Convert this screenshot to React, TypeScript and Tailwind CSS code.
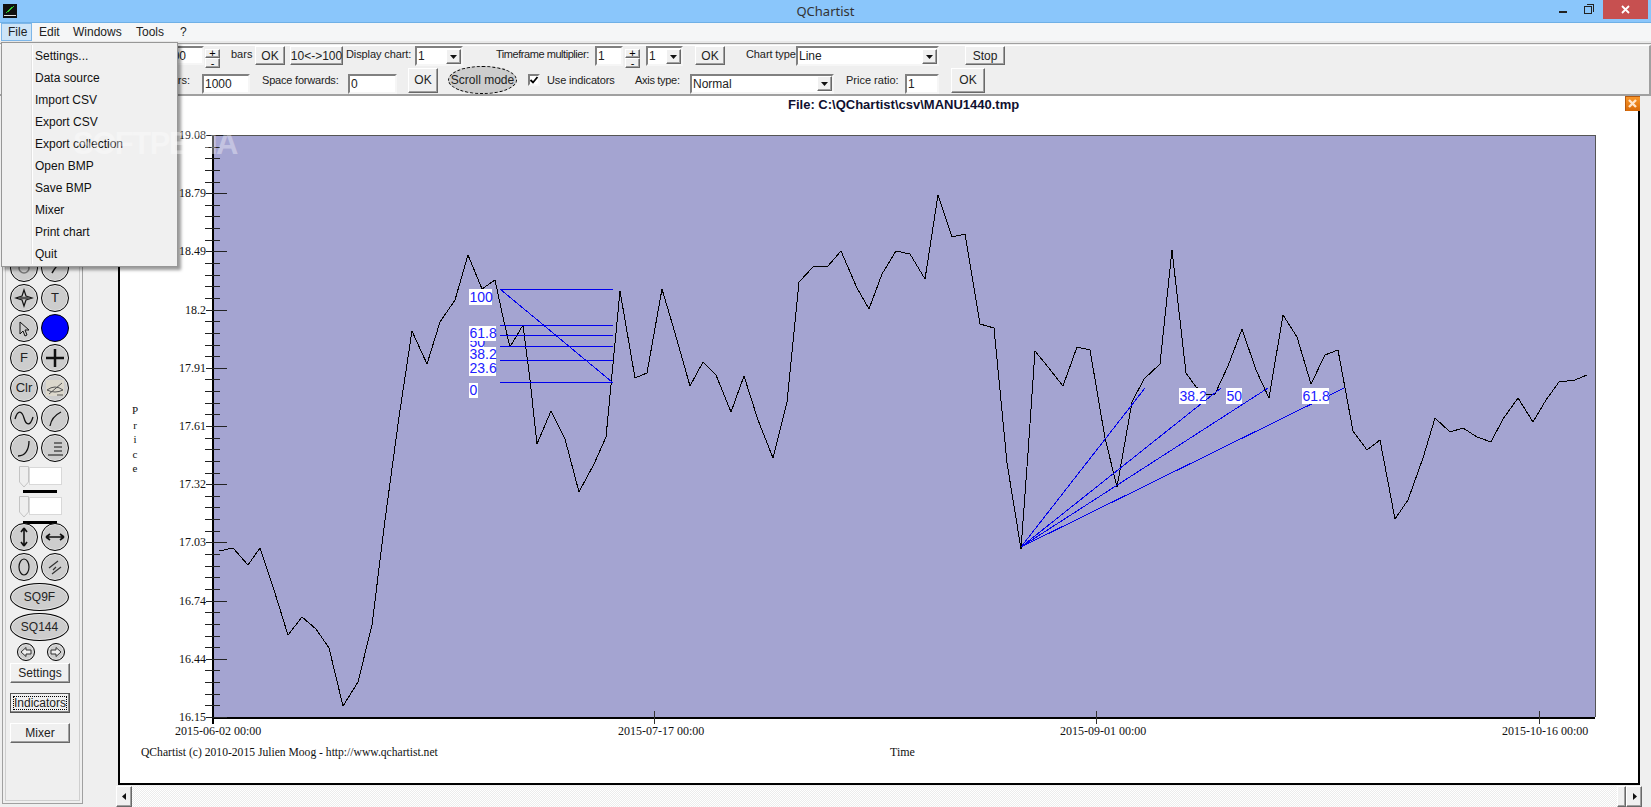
import React from "react";

const trace =
  "219,551 233,548 248,565 260,548 274,590 288,635 302,617 316,629 329,648 343,706 358,682 372,625 385,520 399,417 412,331 427,364 440,322 455,300 468,255 482,289 495,280 504,322 510,347 523,325 530,380 537,444 551,411 565,439 579,492 594,464 606,437 620,291 635,378 647,373 662,289 675,333 690,386 703,362 716,375 731,412 744,376 758,420 773,458 787,402 799,282 813,267 828,266 841,251 857,288 869,309 882,274 896,251 910,254 925,279 938,195 952,237 965,234 980,324 994,328 1007,463 1021,549 1028,453 1035,351 1048,367 1063,386 1077,347 1090,350 1105,438 1117,487 1132,402 1144,379 1160,364 1172,250 1186,373 1196,387 1207,395 1215,394 1228,366 1242,329 1256,370 1269,398 1283,315 1297,337 1311,384 1325,355 1338,350 1353,431 1367,450 1380,440 1395,519 1408,500 1423,458 1435,418 1450,432 1463,428 1477,437 1491,442 1503,419 1518,398 1533,422 1546,400 1559,382 1575,380 1587,375";

const yLabels = ["19.08", "18.79", "18.49", "18.2", "17.91", "17.61", "17.32", "17.03", "16.74", "16.44", "16.15"];
const menuItems = ["Settings...", "Data source", "Import CSV", "Export CSV", "Export collection", "Open BMP", "Save BMP", "Mixer", "Print chart", "Quit"];
const retrace = [289, 325, 335, 346, 360, 382];

const raised = "bg-[#f0f0f0] border border-t-white border-l-white border-r-[#696969] border-b-[#696969] shadow-[inset_-1px_-1px_0_#a0a0a0]";
const sunken = "bg-white border-2 border-t-[#808080] border-l-[#808080] border-r-[#f6f6f6] border-b-[#f6f6f6]";
const round = "bg-[#cdcdcd] border-[1.5px] border-black shadow-[inset_0_0_0_1px_#e6e6e6] flex items-center justify-center";

const Arrow = ({ dir = "down" }: { dir?: "down" | "left" | "right" }) => (
  <svg width="9" height="9" viewBox="0 0 9 9">
    {dir === "down" && <polygon points="1,3 8,3 4.5,7" fill="#111" />}
    {dir === "left" && <polygon points="6,1 6,8 2,4.5" fill="#111" />}
    {dir === "right" && <polygon points="3,1 3,8 7,4.5" fill="#111" />}
  </svg>
);

const Label = ({ className, children }: { className: string; children: React.ReactNode }) => (
  <div className={`shrink-0 whitespace-nowrap text-[11px] leading-[14px] text-[#222] ${className}`}>{children}</div>
);

const Btn = ({ className, children }: { className: string; children: React.ReactNode }) => (
  <div className={`shrink-0 flex items-center justify-center whitespace-nowrap text-[12px] text-[#222] ${raised} ${className}`}>{children}</div>
);

const Field = ({ className, value }: { className: string; value: string }) => (
  <div className={`shrink-0 flex items-center pl-[1px] text-[12px] text-[#222] ${sunken} ${className}`}>{value}</div>
);

const Combo = ({ className, value }: { className: string; value: string }) => (
  <div className={`shrink-0 flex items-center justify-between text-[12px] text-[#222] ${sunken} ${className}`}>
    <span className="pl-[1px]">{value}</span>
    <div className={`w-[15px] h-[15px] flex items-center justify-center ${raised}`}>
      <Arrow />
    </div>
  </div>
);

const Spin = ({ className }: { className: string }) => (
  <div className={`shrink-0 w-[15px] h-[19px] flex flex-col mt-[3px] ${className}`}>
    <div className={`h-[9px] flex items-center justify-center text-[11px] leading-none ${raised}`}>+</div>
    <div className={`h-[10px] flex items-center justify-center text-[11px] leading-none ${raised}`}>-</div>
  </div>
);

const Tool = ({ children, className = "" }: { children?: React.ReactNode; className?: string }) => (
  <div className={`w-[28px] h-[28px] rounded-full text-[13px] text-[#222] ${round} ${className}`}>{children}</div>
);

const Glyph = ({ children }: { children: React.ReactNode }) => (
  <svg width="24" height="24" viewBox="0 0 24 24" fill="none" stroke="#111" strokeWidth="1.5">
    {children}
  </svg>
);

const Slider = ({ className }: { className: string }) => (
  <div className={`flex items-start ml-[13px] ${className}`}>
    <svg width="10" height="22" viewBox="0 0 10 22">
      <polygon points="0.5,0.5 9.5,0.5 9.5,16 5,21 0.5,16" fill="#eeeeee" stroke="#c4c4c4" />
    </svg>
    <div className="w-[33px] h-[18px] mt-[1px] bg-white border border-[#d8d8d8]" />
  </div>
);

const Rule = ({ className }: { className: string }) => <div className={`ml-[17px] w-[34px] h-[3px] bg-black ${className}`} />;

const WideTool = ({ label, className }: { label: string; className: string }) => (
  <div className={`ml-[4px] w-[59px] h-[28px] rounded-[50%] text-[12px] text-[#222] ${round} ${className}`}>{label}</div>
);

const SideBtn = ({ label, className = "" }: { label: string; className?: string }) => (
  <div className={`ml-[4px] w-[60px] h-[20px] flex items-center justify-center text-[12px] text-[#222] ${className}`}>{label}</div>
);

const Sidebar = () => (
  <div className="ml-[2px] w-[81px] h-[708px] border border-[#a0a0a0]">
    <div className="m-[2px] h-[702px] border border-[#cfcfcf] pt-[4px]">
      <div className="ml-[4px] grid grid-cols-[28px_28px] gap-x-[3px] gap-y-[2px]">
        <Tool />
        <Tool />
        <Tool />
        <Tool />
        <Tool />
        <Tool />
        <Tool />
        <Tool />
        <Tool />
        <Tool />
        <Tool>
          <Glyph>
            <circle cx="12" cy="12" r="5" stroke="#777" />
          </Glyph>
        </Tool>
        <Tool>
          <Glyph>
            <path d="M9 17 C12 12 14 9 17 7" />
          </Glyph>
        </Tool>
        <Tool>
          <Glyph>
            <path d="M12 4 L14 10 L20 12 L14 14 L12 20 L10 14 L4 12 L10 10 Z" strokeWidth="1.2" />
            <path d="M7 12 H17" strokeWidth="2.5" stroke="#555" />
          </Glyph>
        </Tool>
        <Tool>T</Tool>
        <Tool>
          <Glyph>
            <path d="M8 6 L8 18 L11 15 L13 20 L15 19 L13 14 L17 14 Z" strokeWidth="1" fill="#cdcdcd" />
          </Glyph>
        </Tool>
        <div className="w-[28px] h-[28px] rounded-full bg-[#0000ff] border-[1.5px] border-black" />
        <Tool>F</Tool>
        <Tool>
          <Glyph>
            <path d="M12 3 V21 M3 12 H21" strokeWidth="2.5" />
          </Glyph>
        </Tool>
        <Tool className="text-[12px]">Clr</Tool>
        <Tool>
          <svg width="24" height="24" viewBox="0 0 24 24" fill="none" stroke="#555" strokeWidth="1">
            <rect x="3" y="4" width="18" height="16" fill="#dcd8cc" stroke="none" />
            <path d="M4 14 Q12 8 20 14 Q12 18 4 14 M6 18 L19 7 M14 19 H20" />
          </svg>
        </Tool>
        <Tool>
          <Glyph>
            <path d="M3 13 C6 3 10 5 12 12 C14 19 18 21 21 11" strokeWidth="1.3" />
          </Glyph>
        </Tool>
        <Tool>
          <Glyph>
            <path d="M7 20 C8 14 12 9 18 6" strokeWidth="1.3" />
          </Glyph>
        </Tool>
        <Tool>
          <Glyph>
            <path d="M6 20 C13 20 17 14 17 5" strokeWidth="1.3" />
          </Glyph>
        </Tool>
        <Tool>
          <Glyph>
            <path d="M11 7 H19 M11 11 H19 M11 15 H19 M5 19 H20" strokeWidth="1.2" />
          </Glyph>
        </Tool>
      </div>
      <Slider className="mt-[4px]" />
      <Rule className="mt-[2px]" />
      <Slider className="mt-[3px]" />
      <Rule className="mt-[3px]" />
      <div className="ml-[4px] mt-[-1px] grid grid-cols-[28px_28px] gap-x-[3px] gap-y-[2px]">
        <Tool>
          <Glyph>
            <path d="M12 3 V21 M12 3 L9 7 M12 3 L15 7 M12 21 L9 17 M12 21 L15 17" strokeWidth="1.6" />
          </Glyph>
        </Tool>
        <Tool>
          <Glyph>
            <path d="M3 12 H21 M3 12 L7 9 M3 12 L7 15 M21 12 L17 9 M21 12 L17 15" strokeWidth="1.6" />
          </Glyph>
        </Tool>
        <Tool>
          <Glyph>
            <ellipse cx="12" cy="12" rx="5" ry="8" strokeWidth="1.2" />
          </Glyph>
        </Tool>
        <Tool>
          <Glyph>
            <path d="M6 13 L15 6 M10 15 L13 12 M9 19 L18 12" strokeWidth="1.2" stroke="#333" />
          </Glyph>
        </Tool>
      </div>
      <WideTool label="SQ9F" className="mt-[2px]" />
      <WideTool label="SQ144" className="mt-[2px]" />
      <div className="ml-[11px] mt-[2px] flex gap-[12px]">
        <div className={`w-[18px] h-[18px] rounded-full ${round}`}>
          <svg width="12" height="12" viewBox="0 0 12 12">
            <path d="M1 6 L6 1.5 V4 H11 V8 H6 V10.5 Z" fill="#eee" stroke="#333" />
          </svg>
        </div>
        <div className={`w-[18px] h-[18px] rounded-full ${round}`}>
          <svg width="12" height="12" viewBox="0 0 12 12">
            <path d="M11 6 L6 1.5 V4 H1 V8 H6 V10.5 Z" fill="#eee" stroke="#333" />
          </svg>
        </div>
      </div>
      <SideBtn label="Settings" className={`mt-[2px] ${raised}`} />
      <div className="ml-[4px] mt-[10px] w-[60px] h-[20px] p-[2px] bg-[#f0f0f0] border border-[#555] shadow-[inset_-1px_-1px_0_#888]">
        <div className="h-full flex items-center justify-center text-[12px] text-[#222] border border-dotted border-black">Indicators</div>
      </div>
      <SideBtn label="Mixer" className={`mt-[10px] ${raised}`} />
    </div>
  </div>
);

const Chart = () => (
  <div className="relative ml-[2px] mr-[2px] h-[689px] bg-white border-l-2 border-r-2 border-b-2 border-black">
    <svg className="absolute inset-0" width="1518" height="687" viewBox="120 96 1518 687" shapeRendering="crispEdges">
      <rect x="213" y="135" width="1382" height="582" fill="#a4a4d1" />
      <path d="M213 135.5 H1595.5 V717" stroke="#555" strokeWidth="1.5" fill="none" />
      <path d="M212.5 135 V724 M212 717.5 H1595" stroke="#000" strokeWidth="2" fill="none" />
      {Array.from({ length: 51 }, (_, i) => {
        const y = Math.round(135 + i * 11.64);
        const major = i % 5 === 0;
        return <line key={i} x1={major ? 206 : 205} x2={major ? 227 : 220} y1={y + 0.5} y2={y + 0.5} stroke="#222" />;
      })}
      {[654.5, 1096.5, 1539.5].map((x) => (
        <line key={x} x1={x} x2={x} y1="711" y2="724" stroke="#333" />
      ))}
      <polyline points={trace} fill="none" stroke="#000" />
      {retrace.map((y) => (
        <line key={y} x1="500" x2="613" y1={y + 0.5} y2={y + 0.5} stroke="#0000ee" />
      ))}
      <line x1="500" y1="289" x2="612" y2="382" stroke="#0000ee" />
      <line x1="1021" y1="547" x2="1145" y2="388" stroke="#0000ee" />
      <line x1="1021" y1="547" x2="1221" y2="388" stroke="#0000ee" />
      <line x1="1021" y1="547" x2="1268" y2="388" stroke="#0000ee" />
      <line x1="1021" y1="547" x2="1344" y2="388" stroke="#0000ee" />
      <g className="font-['Liberation_Sans',sans-serif] text-[14px]" fill="#2020ff" shapeRendering="auto">
        <rect x="469" y="289" width="23" height="16" fill="#fff" shapeRendering="crispEdges" />
        <text x="469.5" y="302">100</text>
        <rect x="469" y="347" width="27" height="15" fill="#fff" shapeRendering="crispEdges" />
        <text x="469.5" y="359">38.2</text>
        <rect x="469" y="336" width="15" height="12" fill="#fff" shapeRendering="crispEdges" />
        <text x="469.5" y="347">50</text>
        <rect x="469" y="326" width="27" height="15" fill="#fff" shapeRendering="crispEdges" />
        <text x="469.5" y="338">61.8</text>
        <rect x="469" y="362" width="27" height="14" fill="#fff" shapeRendering="crispEdges" />
        <text x="469.5" y="373">23.6</text>
        <rect x="469" y="383" width="9" height="15" fill="#fff" shapeRendering="crispEdges" />
        <text x="469.5" y="395">0</text>
        <rect x="1179" y="388" width="27" height="16" fill="#fff" shapeRendering="crispEdges" />
        <text x="1179.5" y="401">38.2</text>
        <rect x="1226" y="388" width="16" height="16" fill="#fff" shapeRendering="crispEdges" />
        <text x="1226.5" y="401">50</text>
        <rect x="1302" y="388" width="27" height="16" fill="#fff" shapeRendering="crispEdges" />
        <text x="1302.5" y="401">61.8</text>
      </g>
      <g className="font-['Liberation_Serif',serif] text-[12px]" fill="#111" shapeRendering="auto">
        {yLabels.map((l, i) => (
          <text key={l} x="206" y={139 + i * 58.2} textAnchor="end">
            {l}
          </text>
        ))}
        <text x="175" y="735">2015-06-02 00:00</text>
        <text x="618" y="735">2015-07-17 00:00</text>
        <text x="1060" y="735">2015-09-01 00:00</text>
        <text x="1502" y="735">2015-10-16 00:00</text>
        <text x="141" y="756" fontSize="11.6">QChartist (c) 2010-2015 Julien Moog - http://www.qchartist.net</text>
        <text x="890" y="756">Time</text>
        {"Price".split("").map((c, i) => (
          <text key={c} x="135" y={414 + i * 14.5} fontSize="11" textAnchor="middle">
            {c}
          </text>
        ))}
      </g>
    </svg>
    <div className="relative pl-[668px] pt-[1px] text-[13px] leading-[16px] font-bold text-[#101030] whitespace-nowrap">
      File: C:\QChartist\csv\MANU1440.tmp
    </div>
    <div className="absolute top-0 right-[-2px]">
      <svg width="15" height="15" viewBox="0 0 15 15" shapeRendering="crispEdges">
        <defs>
          <linearGradient id="orange" x1="0" y1="0" x2="0" y2="1">
            <stop offset="0" stopColor="#fb9a2c" />
            <stop offset="1" stopColor="#d96a08" />
          </linearGradient>
        </defs>
        <rect width="15" height="15" fill="url(#orange)" stroke="#b65a10" />
        <path d="M4 4 L11 11 M11 4 L4 11" stroke="#ffe6cc" strokeWidth="2.4" shapeRendering="auto" />
      </svg>
    </div>
  </div>
);

const Scrollbar = () => (
  <div className="mt-[1px] h-[21px] flex bg-[repeating-conic-gradient(#ececec_0_25%,#ffffff_0_50%)] bg-[length:2px_2px]">
    <div className={`w-[16px] flex items-center justify-center ${raised}`}>
      <Arrow dir="left" />
    </div>
    <div className="flex-1" />
    <div className={`w-[9px] ${raised}`} />
    <div className={`w-[16px] flex items-center justify-center ${raised}`}>
      <Arrow dir="right" />
    </div>
  </div>
);

const Toolbar = () => (
  <div className="h-[52px] pt-[1px]">
    <div className="h-[51px] border-t border-white border-r-2 border-r-[#a0a0a0] border-b-2 border-b-[#a0a0a0]">
      <div className="h-[20px] flex items-start">
        <Field className="ml-[163px] w-[41px] h-[19px]" value="100" />
        <Spin className="ml-[1px]" />
        <Label className="ml-[11px] mt-[1px] w-[24px]">bars</Label>
        <Btn className="w-[30px] h-[19px]">OK</Btn>
        <Btn className="ml-[5px] w-[53px] h-[19px] text-[11.5px]">{"10<->100"}</Btn>
        <Label className="ml-[3px] mt-[1px] w-[69px] tracking-[-0.1px]">Display chart:</Label>
        <Combo className="w-[48px] h-[20px]" value="1" />
        <Label className="ml-[33px] mt-[1px] w-[99px] tracking-[-0.45px]">Timeframe multiplier:</Label>
        <Field className="w-[28px] h-[20px]" value="1" />
        <Spin className="ml-[2px]" />
        <Combo className="ml-[6px] w-[37px] h-[20px]" value="1" />
        <Btn className="ml-[12px] w-[30px] h-[19px]">OK</Btn>
        <Label className="ml-[21px] mt-[1px] w-[50px] tracking-[-0.1px]">Chart type:</Label>
        <Combo className="w-[143px] h-[20px]" value="Line" />
        <Btn className="ml-[26px] w-[40px] h-[19px]">Stop</Btn>
      </div>
      <div className="h-[28px] flex items-center">
        <Label className="w-[190px] text-right">Max bars:</Label>
        <Field className="ml-[12px] mt-[7px] w-[48px] h-[20px]" value="1000" />
        <Label className="ml-[12px] w-[86px] tracking-[-0.2px]">Space forwards:</Label>
        <Field className="mt-[7px] w-[49px] h-[20px]" value="0" />
        <Btn className="ml-[11px] w-[30px] h-[25px]">OK</Btn>
        <div className="ml-[10px] w-[69px] h-[28px] shrink-0 rounded-[50%] bg-[#cdcdcd] border border-dashed border-black flex items-center justify-center text-[12px] text-[#222]">
          Scroll mode
        </div>
        <div className={`ml-[11px] w-[12px] h-[12px] shrink-0 flex items-center justify-center ${sunken}`}>
          <svg width="10" height="10" viewBox="0 0 10 10" className="shrink-0">
            <path d="M1.5 5 L4 7.5 L8.5 2" fill="none" stroke="#000" strokeWidth="1.8" />
          </svg>
        </div>
        <Label className="ml-[7px] w-[88px] tracking-[-0.15px]">Use indicators</Label>
        <Label className="w-[55px] tracking-[-0.3px]">Axis type:</Label>
        <Combo className="mt-[7px] w-[144px] h-[20px]" value="Normal" />
        <Label className="ml-[12px] w-[59px]">Price ratio:</Label>
        <Field className="mt-[7px] w-[34px] h-[20px]" value="1" />
        <Btn className="ml-[12px] w-[34px] h-[25px]">OK</Btn>
      </div>
    </div>
  </div>
);

export default function App() {
  return (
    <div className="relative w-[1651px] h-[807px] overflow-hidden bg-[#efefef] font-['Liberation_Sans',Arial,sans-serif]">
      <div className="h-[23px] grid grid-cols-[1fr_auto_1fr] bg-[#8ac6fb] border-b border-[#6fb0e6]">
        <div className="pl-[3px] pt-[4px]">
          <svg width="14" height="14" viewBox="0 0 14 14" shapeRendering="crispEdges">
            <rect width="14" height="14" fill="#111" />
            <rect x="1" y="11" width="12" height="1" fill="#ddd" />
            <path d="M3 9 L11 2" stroke="#2fd12f" strokeWidth="1.2" />
          </svg>
        </div>
        <div className="font-['Noto_Sans',sans-serif] text-[13px] leading-[22px] text-[#333]">QChartist</div>
        <div className="flex justify-end pr-[3px]">
          <div className="mt-[11px] mr-[17px] w-[8px] h-[2px] bg-[#222]" />
          <svg className="mt-[4px] mr-[9px]" width="10" height="10" viewBox="0 0 10 10" fill="none" stroke="#222" shapeRendering="crispEdges">
            <rect x="0.5" y="2.5" width="7" height="7" strokeWidth="1" />
            <path d="M2.5 0.5 H9.5 V7.5" />
          </svg>
          <div className="w-[45px] h-[19px] bg-[#c75050] flex items-center justify-center">
            <svg width="9" height="9" viewBox="0 0 9 9">
              <path d="M1 1 L8 8 M8 1 L1 8" stroke="#fff" strokeWidth="1.8" />
            </svg>
          </div>
        </div>
      </div>
      <div className="h-[18px] flex bg-[#f5f6f7] text-[12px] text-[#222]">
        <div className="ml-[1px] w-[31px] pl-[6px] leading-[16px] bg-[#cde4f7] border border-[#7db6e8]">File</div>
        <div className="ml-[7px] w-[34px] leading-[18px]">Edit</div>
        <div className="w-[63px] leading-[18px]">Windows</div>
        <div className="w-[44px] leading-[18px]">Tools</div>
        <div className="leading-[18px]">?</div>
      </div>
      <div className="h-[3px] bg-[#e8e8e8] border-b border-[#a0a0a0]" />
      <Toolbar />
      <div className="flex h-[711px]">
        <div className="w-[116px] shrink-0">
          <Sidebar />
        </div>
        <div className="w-[1526px] shrink-0">
          <Chart />
          <Scrollbar />
        </div>
      </div>

      <div className="absolute left-[1px] top-[42px] w-[177px] h-[225px] py-[2px] bg-[#f0f0f0] border border-[#979797] shadow-[3px_3px_3px_rgba(0,0,0,0.4)]">
        <div className="absolute left-[29px] top-[2px] bottom-[2px] w-[2px] bg-[#e2e2e2] border-r border-white" />
        {menuItems.map((item) => (
          <div key={item} className="h-[22px] pl-[33px] text-[12px] leading-[22px] text-[#111]">
            {item}
          </div>
        ))}
      </div>

      <div className="absolute left-[73px] top-[126px] text-[31px] leading-[36px] tracking-[-1.5px] font-bold text-white opacity-35 whitespace-nowrap pointer-events-none">
        SOFTPEDIA
      </div>
    </div>
  );
}
